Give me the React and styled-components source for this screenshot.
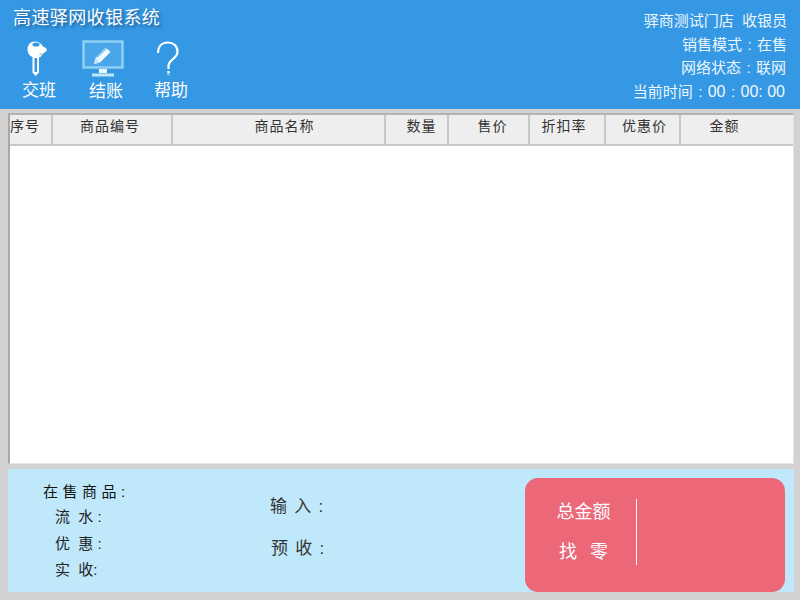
import styled, { createGlobalStyle } from "styled-components";

const GlobalStyle = createGlobalStyle`
  html, body {
    margin: 0;
    padding: 0;
    background: #d2d2d2;
  }
  * {
    box-sizing: border-box;
  }
`;

const FONT = `"Liberation Sans", "Noto Sans CJK SC", sans-serif`;

const Page = styled.div`
  width: 800px;
  height: 600px;
  overflow: hidden;
  background: #d2d2d2;
  font-family: ${FONT};
  display: flex;
  flex-direction: column;
`;

const Header = styled.header`
  height: 109px;
  background: #3498e4;
  color: #fff;
  display: flex;
  justify-content: space-between;
  flex-shrink: 0;
`;

const Brand = styled.div`
  display: flex;
  flex-direction: column;
  padding: 6px 0 0 13px;
`;

const Title = styled.h1`
  margin: 0;
  font-size: 18px;
  line-height: 25px;
  letter-spacing: 0.4px;
  font-weight: 400;
  text-shadow: 2px 2px 3px rgba(20, 60, 100, 0.65);
`;

const Tools = styled.div`
  display: flex;
  margin: 8px 0 0 -8px;
`;

const Tool = styled.div`
  width: 65px;
  display: flex;
  flex-direction: column;
  align-items: center;
`;

const ToolIcon = styled.div`
  height: 40px;
  display: flex;
  align-items: center;
  justify-content: center;
`;

const ToolLabel = styled.span`
  font-size: 17px;
  line-height: 24px;
  padding-left: ${(p) => p.$shift || 0}px;
  margin-top: ${(p) => p.$offset || 0}px;
`;

const Info = styled.div`
  display: flex;
  flex-direction: column;
  align-items: flex-end;
  padding: 9px 13px 0 0;
`;

const InfoLine = styled.div`
  font-size: 15px;
  line-height: 23.7px;
  white-space: pre;
  margin-right: ${(p) => p.$inset || 0}px;
  color: #eef6fd;
`;

const Colon = styled.span`
  display: inline-block;
  width: 15px;
  text-align: center;
`;

const Digits = styled.span`
  font-size: 16px;
`;

const Grid = styled.section`
  height: 351px;
  margin: 4px 6px 0 8px;
  background: #fff;
  border-top: 2px solid #b5b3ae;
  border-left: 2px solid #a8a8a4;
  border-right: 1px solid #e4e4e4;
  border-bottom: 1px solid #e8e8e8;
  flex-shrink: 0;
`;

const GridHead = styled.div`
  height: 31px;
  display: grid;
  grid-template-columns: 43px 120px 213px 63px 81px 76px 75px 1fr;
  background: #eeeeee;
  border-bottom: 2px solid #c8c8c8;
`;

const HeadCell = styled.div`
  border-right: 2px solid #c8c8c8;
  font-size: 14px;
  line-height: 23px;
  letter-spacing: 1px;
  color: #333;
  text-align: center;
  white-space: nowrap;
  padding-left: ${(p) => p.$left || 0}px;
  padding-right: ${(p) => p.$right || 0}px;
  &:last-child {
    border-right: 0;
  }
`;

const Footer = styled.footer`
  height: 123px;
  margin: 5px 6px 0 8px;
  background: #bfe8fa;
  display: flex;
  flex-shrink: 0;
`;

const Stats = styled.div`
  width: 262px;
  padding: 11px 0 0 35px;
  display: flex;
  flex-direction: column;
`;

const StatHead = styled.div`
  font-size: 15px;
  line-height: 24px;
  letter-spacing: 4.5px;
  color: #111;
`;

const StatRow = styled.div`
  font-size: 15px;
  line-height: 26.5px;
  padding-left: 12px;
  color: #222;
  white-space: pre;
`;

const Inputs = styled.div`
  width: 255px;
  padding-top: 25px;
  display: flex;
  flex-direction: column;
  gap: 16px;
`;

const InputRow = styled.div`
  font-size: 17px;
  line-height: 26px;
  word-spacing: 2.5px;
  color: #333;
  white-space: pre;
  padding-left: ${(p) => p.$left || 0}px;
`;

const Totals = styled.div`
  width: 260px;
  height: 114px;
  margin-top: 9px;
  background: #ec6878;
  border-radius: 13px;
  color: #fff;
  display: flex;
  padding-top: 21px;
`;

const TotalLabels = styled.div`
  width: 112px;
  height: 66px;
  border-right: 1px solid #fff;
  display: flex;
  flex-direction: column;
  gap: 14px;
  padding-left: 6px;
`;

const TotalLabel = styled.div`
  text-align: center;
  font-size: 18px;
  line-height: 26px;
  word-spacing: 1.5px;
  white-space: pre;
`;

const KeyIcon = () => (
  <svg width="22" height="36" viewBox="0 0 22 36">
    <path
      d="M8 .500C3.500.500.500 4 .500 8.500c0 3.500 2 6.500 5 7.500v15.500l3 3.500 3.500-3.500V16.500c2-.5 3-2 3.500-3.500l2-1.500 2.500-2-1-2.500-3-1.500C14.500 2.500 11.500.500 8 .500z"
      fill="#fff"
    />
    <ellipse cx="9" cy="3.500" rx="3.500" ry="2" fill="#3498e4" />
    <path d="M15 12.500l-2.500 1.500" stroke="#a9dcc8" strokeWidth="2" />
    <path d="M8.800 17v14" stroke="#3498e4" strokeWidth="2.600" />
  </svg>
);

const ScreenIcon = () => (
  <svg width="42" height="38" viewBox="0 0 42 38">
    <rect x="1.500" y="1.500" width="39" height="26" fill="#4aa6e8" stroke="#8fd0f4" strokeWidth="2.500" />
    <path d="M12 24l1.500-6L24 7.500l4.500 4.500L18 22.500z" fill="#f2fbff" />
    <path d="M13.500 18l4.500 4.500-6 1.500z" fill="#bfe4f8" />
    <path d="M15 17.500L25 8" stroke="#4aa6e8" strokeWidth="1" />
    <path d="M17 29h8v4h-8z" fill="#eefaff" />
    <path d="M10 33.500h22v3H10z" fill="#bdeaf8" />
  </svg>
);

const QuestionIcon = () => (
  <svg width="24" height="38" viewBox="0 0 24 38">
    <path
      d="M2 13C2 6.500 6 2.500 12 2.500c5.500 0 9.500 3.500 9.500 9 0 4-2.500 6-5 8-2.500 2-4 3.500-4 6.500v3"
      fill="none"
      stroke="#fff"
      strokeWidth="2.200"
    />
    <path d="M11.300 31h2.400v2h-2.400z" fill="#fff" />
    <path d="M11.300 33h2.400v2.500h-2.400z" fill="#7fd6c8" />
  </svg>
);

const columns = [
  { text: "序号", right: 14 },
  { text: "商品编号", right: 4 },
  { text: "商品名称", left: 12 },
  { text: "数量", left: 10 },
  { text: "售价", left: 8 },
  { text: "折扣率", right: 6 },
  { text: "优惠价", left: 4 },
  { text: "金额", right: 25 },
];

const App = () => {
  return (
    <Page>
      <GlobalStyle />
      <Header>
        <Brand>
          <Title>高速驿网收银系统</Title>
          <Tools>
            <Tool>
              <ToolIcon>
                <KeyIcon />
              </ToolIcon>
              <ToolLabel $shift={3}>交班</ToolLabel>
            </Tool>
            <Tool>
              <ToolIcon>
                <ScreenIcon />
              </ToolIcon>
              <ToolLabel $shift={7} $offset={1}>
                结账
              </ToolLabel>
            </Tool>
            <Tool>
              <ToolIcon>
                <QuestionIcon />
              </ToolIcon>
              <ToolLabel $shift={7}>帮助</ToolLabel>
            </Tool>
          </Tools>
        </Brand>
        <Info>
          <InfoLine>驿商测试门店  收银员</InfoLine>
          <InfoLine>
            销售模式<Colon>:</Colon>在售
          </InfoLine>
          <InfoLine $inset={1}>
            网络状态<Colon>:</Colon>联网
          </InfoLine>
          <InfoLine $inset={2}>
            当前时间<Colon>:</Colon>
            <Digits>00</Digits>
            <Colon>:</Colon>
            <Digits>00: 00</Digits>
          </InfoLine>
        </Info>
      </Header>

      <Grid>
        <GridHead>
          {columns.map((col) => (
            <HeadCell key={col.text} $left={col.left} $right={col.right}>
              {col.text}
            </HeadCell>
          ))}
        </GridHead>
      </Grid>

      <Footer>
        <Stats>
          <StatHead>在售商品:</StatHead>
          <StatRow>流  水 :</StatRow>
          <StatRow>优  惠 :</StatRow>
          <StatRow>实  收:</StatRow>
        </Stats>
        <Inputs>
          <InputRow>输 入 :</InputRow>
          <InputRow $left={1}>预 收 :</InputRow>
        </Inputs>
        <Totals>
          <TotalLabels>
            <TotalLabel>总金额</TotalLabel>
            <TotalLabel>找  零</TotalLabel>
          </TotalLabels>
        </Totals>
      </Footer>
    </Page>
  );
};

export default App;
